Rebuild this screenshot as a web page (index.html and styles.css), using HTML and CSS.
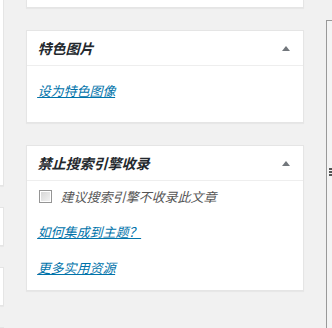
FILE: index.html
```html
<!DOCTYPE html>
<html lang="zh-CN">
<head>
    <meta charset="UTF-8">
    <meta name="viewport" content="width=device-width, initial-scale=1.0">
    <title>文章设置</title>
    <link rel="stylesheet" href="styles.css">
</head>
<body>
    <!-- edge of the editor column -->
    <div class="edge">
        <div class="edge-box first"></div>
        <div class="edge-box"></div>
        <div class="edge-box"></div>
        <div class="edge-box last"></div>
    </div>

    <div class="sidebar">
        <div class="postbox top-cut"></div>

        <div class="postbox">
            <h2 class="hndle">
                <span class="slant">特色图片</span>
                <span class="toggle"></span>
            </h2>
            <div class="inside">
                <p class="single"><a class="slant" href="#">设为特色图像</a></p>
            </div>
        </div>

        <div class="postbox">
            <h2 class="hndle">
                <span class="slant">禁止搜索引擎收录</span>
                <span class="toggle"></span>
            </h2>
            <div class="inside">
                <label class="check-row">
                    <span class="checkbox"></span>
                    <span class="slant">建议搜索引擎不收录此文章</span>
                </label>
                <p class="row"><a class="slant" href="#">如何集成到主题？</a></p>
                <p class="row"><a class="slant" href="#">更多实用资源</a></p>
            </div>
        </div>
    </div>

    <div class="scroll-panel">
        <span class="grip"></span>
    </div>
</body>
</html>
```

FILE: styles.css
```css
html, body {
    margin: 0;
    padding: 0;
    overflow: hidden;
}

body {
    display: flex;
    height: 328px;
    background-color: #f1f1f1;
    font-family: "Noto Sans CJK SC", "Noto Sans", sans-serif;
    font-size: 13px;
    color: #444;
}

.slant {
    display: inline-block;
    transform: skewX(-15deg);
}

.edge {
    width: 4px;
    display: flex;
    flex-direction: column;
    gap: 21px;
    overflow: hidden;
}

.edge-box {
    height: 37px;
    background: white;
    border: 1px solid #e5e5e5;
    border-left: none;
    box-shadow: 0 1px 1px rgba(0, 0, 0, 0.04);
    flex-shrink: 0;
}

.edge-box.first {
    height: 185px;
    border-top: none;
}

.edge-box.last {
    height: 10px;
    border-bottom: none;
}

.sidebar {
    width: 278px;
    margin-left: 22px;
    flex-shrink: 0;
}

.postbox {
    background: white;
    border: 1px solid #e5e5e5;
    box-shadow: 0 1px 1px rgba(0, 0, 0, 0.04);
    margin-bottom: 22px;
}

.postbox.top-cut {
    height: 7px;
    border-top: none;
    margin-bottom: 22px;
}

.hndle {
    display: flex;
    justify-content: space-between;
    align-items: center;
    margin: 0;
    padding: 8px 12px;
    height: 18px;
    font-size: 14px;
    line-height: 18px;
    font-weight: 700;
    color: #23282d;
    border-bottom: 1px solid #eee;
}

.toggle {
    width: 0;
    height: 0;
    margin-right: 1px;
    border-left: 4px solid transparent;
    border-right: 4px solid transparent;
    border-bottom: 5px solid #72777c;
}

.inside {
    padding: 0 12px 13px;
}

.inside p {
    margin: 0;
    line-height: 19px;
}

.inside a {
    color: #0073aa;
    text-decoration: underline;
}

.single {
    padding: 15px 0 9px;
}

.check-row {
    display: flex;
    align-items: center;
    gap: 10px;
    margin-top: 6px;
    line-height: 19px;
    color: #555;
}

.checkbox {
    width: 11px;
    height: 11px;
    border: 1px solid #959595;
    background: linear-gradient(135deg, #d4d4d4, #f4f4f4);
    box-shadow: inset 0 0 0 1px #fff;
}

.row {
    padding-top: 17px;
}

.check-row + .row {
    padding-top: 16px;
}

.scroll-panel {
    margin-left: 22px;
    margin-top: 20px;
    flex: 1;
    background: #f4f4f4;
    border-top: 1px solid #999;
    border-left: 1px solid #999;
    position: relative;
}

.grip {
    position: absolute;
    left: 2px;
    top: 147px;
    width: 4px;
    height: 9px;
    background: repeating-linear-gradient(#555 0 2px, transparent 2px 3px);
}
```
